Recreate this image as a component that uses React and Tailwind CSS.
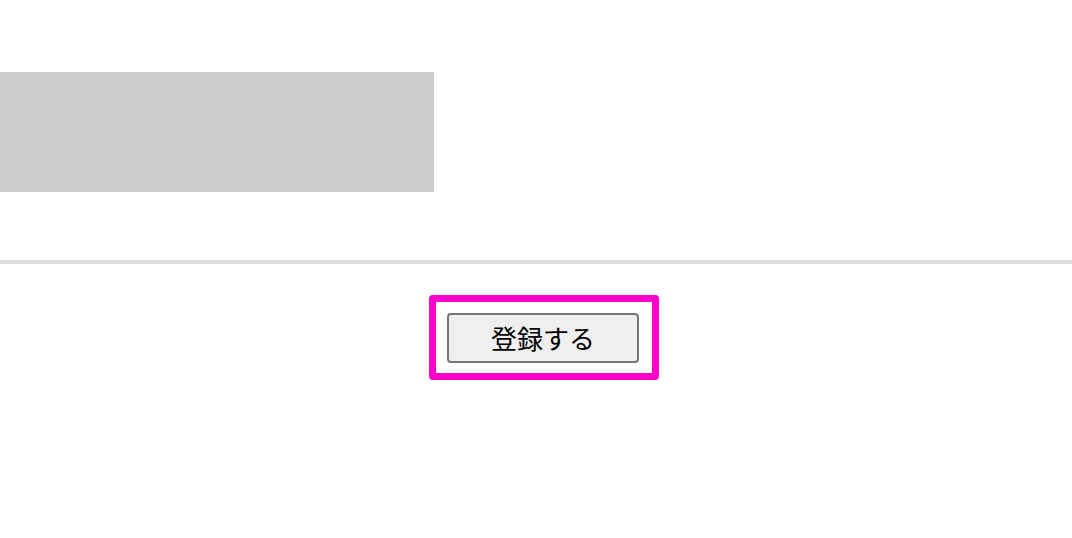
import React from 'react';

const App = () => {
  return (
    <div className="w-[1072px] h-[538px] bg-white overflow-hidden" style={{ fontFamily: '"Noto Sans CJK JP", "Noto Sans", sans-serif' }}>
      {/* placeholder block */}
      <div className="mt-[72px] w-[434px] h-[120px] bg-[#cccccc]" />

      {/* divider */}
      <div className="mt-[68px] h-[4px] bg-[#dddddd]" />

      {/* highlighted submit */}
      <div className="mt-[31px] ml-[429px] w-[230px] h-[85px] border-[7px] border-[#ff00cc] rounded-[4px] flex items-center justify-start pl-[11px]">
        <button
          type="button"
          className="w-[192px] h-[50px] bg-[#efefef] border-2 border-[#767676] rounded-[4px] text-[26px] leading-none text-black flex items-center justify-center"
        >
          登録する
        </button>
      </div>
    </div>
  );
};

export default App;
